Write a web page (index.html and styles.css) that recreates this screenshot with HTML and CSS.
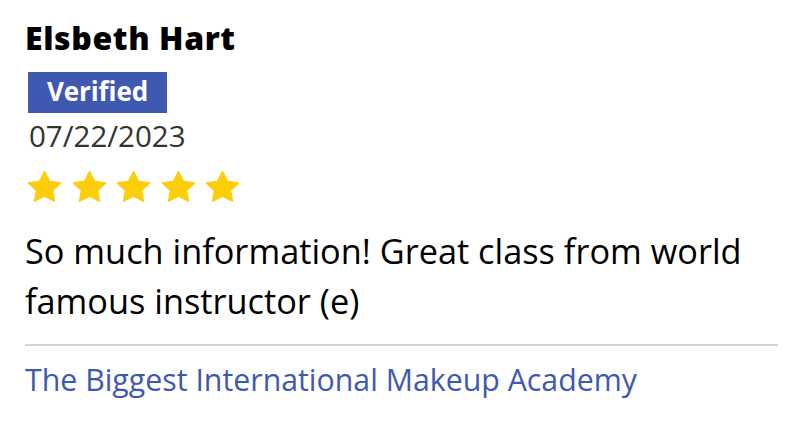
FILE: index.html
```html
<!DOCTYPE html>
<html>
<head>
<meta charset="utf-8">
<link rel="stylesheet" href="styles.css">
</head>
<body>
<article class="review">
  <h2 class="name">Elsbeth Hart</h2>
  <span class="badge">Verified</span>
  <div class="date">07/22/2023</div>
  <div class="stars">
    <svg class="star" viewBox="-0.3 -0.4 20.6 19" preserveAspectRatio="none"><path d="M10 0L12.94 5.95L19.51 6.91L14.76 11.55L15.88 18.09L10 15L4.12 18.09L5.24 11.55L0.49 6.91L7.06 5.95Z"/></svg>
    <svg class="star" viewBox="-0.3 -0.4 20.6 19" preserveAspectRatio="none"><path d="M10 0L12.94 5.95L19.51 6.91L14.76 11.55L15.88 18.09L10 15L4.12 18.09L5.24 11.55L0.49 6.91L7.06 5.95Z"/></svg>
    <svg class="star" viewBox="-0.3 -0.4 20.6 19" preserveAspectRatio="none"><path d="M10 0L12.94 5.95L19.51 6.91L14.76 11.55L15.88 18.09L10 15L4.12 18.09L5.24 11.55L0.49 6.91L7.06 5.95Z"/></svg>
    <svg class="star" viewBox="-0.3 -0.4 20.6 19" preserveAspectRatio="none"><path d="M10 0L12.94 5.95L19.51 6.91L14.76 11.55L15.88 18.09L10 15L4.12 18.09L5.24 11.55L0.49 6.91L7.06 5.95Z"/></svg>
    <svg class="star" viewBox="-0.3 -0.4 20.6 19" preserveAspectRatio="none"><path d="M10 0L12.94 5.95L19.51 6.91L14.76 11.55L15.88 18.09L10 15L4.12 18.09L5.24 11.55L0.49 6.91L7.06 5.95Z"/></svg>
  </div>
  <p class="text">So much information! Great class from world famous instructor (e)</p>
  <hr class="divider">
  <a class="course" href="#">The Biggest International Makeup Academy</a>
</article>
</body>
</html>
```
FILE: styles.css
```css
* { box-sizing: border-box; }
body {
  margin: 0;
  background: #ffffff;
  font-family: "Open Sans", "Noto Sans", sans-serif;
  font-variant-ligatures: none;
  color: #000;
}
.review {
  display: flex;
  flex-direction: column;
  align-items: flex-start;
  padding: 19px 31px 0 25px;
}
.name {
  margin: 0;
  font-size: 32px;
  line-height: 38px;
  font-weight: 800;
  letter-spacing: 0.6px;
  color: #000;
}
.badge {
  margin: 15px 0 0 3px;
  display: inline-block;
  height: 41px;
  padding: 0 19px 2px 19px;
  background: #4059b0;
  color: #fff;
  font-size: 26px;
  line-height: 39px;
  font-weight: 700;
  letter-spacing: -0.1px;
}
.date {
  margin: 6px 0 0 4px;
  font-size: 29.5px;
  line-height: 34px;
  color: #333;
}
.stars {
  margin: 18px 0 0 2px;
  display: flex;
  gap: 9.5px;
}
.star {
  width: 35px;
  height: 31px;
  fill: #fcce0a;
  stroke: #fcce0a;
  stroke-width: 0.8;
  stroke-linejoin: round;
}
.text {
  margin: 24px 0 0 0;
  font-size: 34.3px;
  line-height: 50px;
  color: #000;
}
.divider {
  align-self: stretch;
  margin: 18px 0 0 0;
  border: 0;
  border-top: 2px solid #d4d4d4;
  height: 0;
}
.course {
  margin-top: 14px;
  font-size: 30.3px;
  line-height: 40px;
  color: #4059b0;
  text-decoration: none;
}
```
